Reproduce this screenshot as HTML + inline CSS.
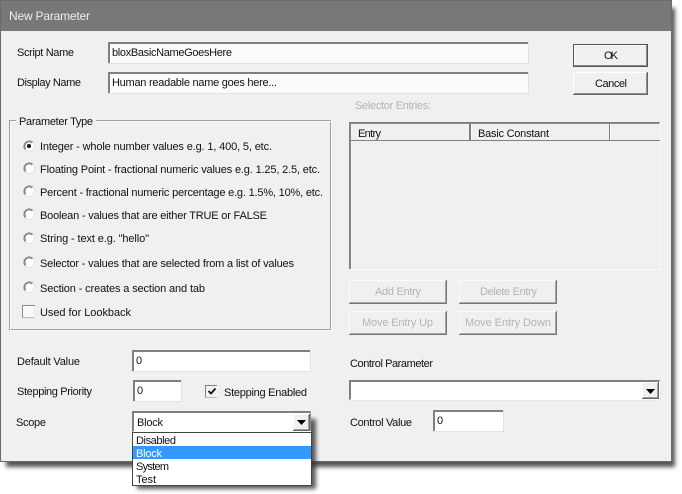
<!DOCTYPE html>
<html><head><meta charset="utf-8"><title>New Parameter</title>
<style>
html,body{margin:0;padding:0;background:#fff;width:682px;height:494px;overflow:hidden}
svg{display:block}
text{font-family:"Liberation Sans",sans-serif;font-size:11px;fill:#111;white-space:pre}
.g{fill:#b4b4b4}
</style></head><body>
<svg width="682" height="494" viewBox="0 0 682 494" xmlns="http://www.w3.org/2000/svg">
<defs>
<filter id="b" x="-10%" y="-10%" width="120%" height="120%"><feGaussianBlur stdDeviation="2.2"/></filter>
<filter id="b2" x="-20%" y="-20%" width="140%" height="140%"><feGaussianBlur stdDeviation="2"/></filter>
<g id="radio">
<circle cx="0" cy="0" r="5.5" fill="#fff"/>
<path d="M-3.8 3.8A5.4 5.4 0 0 1 3.8 -3.8" fill="none" stroke="#8c8c8c" stroke-width="1.2"/>
<path d="M-2.9 2.9A4.1 4.1 0 0 1 2.9 -2.9" fill="none" stroke="#6e6e6e" stroke-width=".8"/>
<path d="M3.9 -3.9A5.5 5.5 0 0 1 -3.9 3.9" fill="none" stroke="#e4e4e4" stroke-width="1.1"/>
</g>
</defs>
<rect x="6" y="8" width="669" height="459" fill="#555" filter="url(#b)"/>
<rect x="0" y="0" width="672" height="462" fill="#6a6a6a"/>
<rect x="1" y="1" width="670" height="30" fill="#787878"/>
<rect x="1" y="31" width="670" height="430" fill="#f0f0f0"/>
<text x="9" y="20" textLength="81" style="fill:#eeeeee;font-size:12px">New Parameter</text>

<!-- inputs -->
<g fill="#fff">
<path d="M108 42h421v22h-421z" fill="#fbfbfb"/>
<path d="M108 72h421v22h-421z" fill="#fbfbfb"/>
<rect x="132" y="350" width="179" height="22"/>
<rect x="133" y="380" width="49" height="22"/>
<rect x="433" y="410" width="71" height="22"/>
</g>
<g fill="none" stroke="#808080" stroke-width="1">
<path d="M108.5 64V42.5H529"/><path d="M109.5 63V43.5H528"/>
<path d="M108.5 94V72.5H529"/><path d="M109.5 93V73.5H528"/>
<path d="M132.5 372V350.5H311"/><path d="M133.5 371V351.5H310"/>
<path d="M133.5 402V380.5H182"/><path d="M134.5 401V381.5H181"/>
<path d="M433.5 432V410.5H504"/><path d="M434.5 431V411.5H503"/>
</g>
<g fill="none" stroke="#e2e2e2"><path d="M529 42v22h-421M529 72v22h-421M311 350v22h-179M182 380v22h-49M504 410v22h-71" transform="translate(-.5 -.5)"/></g>

<text x="17" y="56" textLength="57">Script Name</text>
<text x="17" y="86" textLength="64">Display Name</text>
<text x="112" y="56" textLength="120">bloxBasicNameGoesHere</text>
<text x="112" y="86" textLength="165">Human readable name goes here...</text>

<!-- OK/Cancel -->
<rect x="573" y="44" width="75" height="23" fill="#555"/>
<rect x="574" y="45" width="73" height="21" fill="#8a8a8a"/>
<rect x="574" y="45" width="72" height="20" fill="#fff"/>
<rect x="575" y="46" width="71" height="19" fill="#f0f0f0"/>
<rect x="573" y="72" width="75" height="23" fill="#666"/>
<rect x="573" y="72" width="74" height="22" fill="#fff"/>
<rect x="574" y="73" width="73" height="21" fill="#8f8f8f"/>
<rect x="574" y="73" width="72" height="20" fill="#f0f0f0"/>
<text x="604" y="59" textLength="14">OK</text>
<text x="595" y="87" textLength="32">Cancel</text>

<!-- group box -->
<rect x="9.5" y="120.5" width="321" height="209" fill="none" stroke="#a0a0a0"/>
<rect x="10.5" y="121.5" width="321" height="209" fill="none" stroke="#fcfcfc" opacity=".7"/>
<rect x="16" y="118" width="80" height="6" fill="#f0f0f0"/>
<text x="19" y="125" textLength="74">Parameter Type</text>

<use href="#radio" x="29" y="146"/><circle cx="29" cy="146" r="2" fill="#111"/>
<use href="#radio" x="29" y="168"/>
<use href="#radio" x="29" y="191"/>
<use href="#radio" x="29" y="214"/>
<use href="#radio" x="29" y="238"/>
<use href="#radio" x="29" y="262"/>
<use href="#radio" x="29" y="287"/>
<text x="40" y="150" textLength="232">Integer - whole number values e.g. 1, 400, 5, etc.</text>
<text x="40" y="173" textLength="280">Floating Point - fractional numeric values e.g. 1.25, 2.5, etc.</text>
<text x="40" y="196" textLength="283">Percent - fractional numeric percentage e.g. 1.5%, 10%, etc.</text>
<text x="40" y="219" textLength="227">Boolean - values that are either TRUE or FALSE</text>
<text x="40" y="242" textLength="109">String - text e.g. "hello"</text>
<text x="40" y="267" textLength="254">Selector - values that are selected from a list of values</text>
<text x="40" y="292" textLength="165">Section - creates a section and tab</text>
<rect x="22.5" y="305.5" width="12" height="12" fill="#fafafa" stroke="#8a8a8a"/>
<path d="M34.5 306v12h-12" fill="none" stroke="#e8e8e8"/>
<text x="40" y="316" textLength="91">Used for Lookback</text>

<!-- selector -->
<text class="g" x="355" y="109" textLength="76">Selector Entries:</text>
<rect x="349" y="122" width="312" height="148" fill="#f0f0f0"/>
<path d="M349.5 270V122.5H660" fill="none" stroke="#7f7f7f"/>
<path d="M350.5 269V123.5H659" fill="none" stroke="#8a8a8a"/>
<path d="M660.5 122V269.5H349" fill="none" stroke="#fafafa"/>
<path d="M351 140.5H660" stroke="#808080"/>
<path d="M469.5 124V140M470.5 124V140M609.5 124V140" stroke="#808080"/>
<path d="M471.5 124V140M610.5 124V140" stroke="#fcfcfc"/>
<text x="358" y="137" textLength="23">Entry</text>
<text x="478" y="137" textLength="71">Basic Constant</text>

<!-- disabled buttons -->
<g fill="none">
<path d="M349.5 303V280.5H447" stroke="#fbfbfb"/><path d="M446.5 280V303.5H349" stroke="#777"/>
<path d="M459.5 303V280.5H557" stroke="#fbfbfb"/><path d="M556.5 280V303.5H459" stroke="#777"/>
<path d="M349.5 334V311.5H447" stroke="#fbfbfb"/><path d="M446.5 311V334.5H349" stroke="#777"/>
<path d="M459.5 334V311.5H557" stroke="#fbfbfb"/><path d="M556.5 311V334.5H459" stroke="#777"/>
<path d="M445.5 281V302.5H350M555.5 281V302.5H460M445.5 312V333.5H350M555.5 312V333.5H460" stroke="#a6a6a6"/>
</g>
<text class="g" x="375" y="295" textLength="46">Add Entry</text>
<text class="g" x="480" y="295" textLength="57">Delete Entry</text>
<text class="g" x="362" y="326" textLength="71">Move Entry Up</text>
<text class="g" x="465" y="326" textLength="86">Move Entry Down</text>

<text x="350" y="367" textLength="83">Control Parameter</text>
<rect x="349" y="380" width="312" height="21" fill="#fff"/>
<path d="M349.5 400V380.5H660" fill="none" stroke="#808080"/>
<path d="M350.5 399V381.5H659" fill="none" stroke="#808080"/>
<path d="M660.5 380V400.5H349" fill="none" stroke="#e8e8e8"/>
<rect x="642" y="382" width="17" height="17" fill="#666"/>
<rect x="642" y="382" width="16" height="16" fill="#fff"/>
<rect x="643" y="383" width="15" height="15" fill="#a0a0a0"/>
<rect x="643" y="383" width="14" height="14" fill="#f0f0f0"/>
<path d="M646 389h9l-4.5 5z" fill="#000"/>
<text x="350" y="426" textLength="62">Control Value</text>
<text x="437" y="424" textLength="6">0</text>

<text x="17" y="365" textLength="63">Default Value</text>
<text x="17" y="395" textLength="75">Stepping Priority</text>
<text x="16" y="426" textLength="30">Scope</text>
<text x="136" y="364" textLength="6">0</text>
<text x="137" y="394" textLength="6">0</text>

<rect x="205.5" y="385.5" width="12" height="12" fill="#f2f2f2" stroke="#808080"/>
<path d="M217.5 385v13h-12" fill="none" stroke="#f8f8f8"/>
<path d="M208.5 391l2.5 2.5 4.5-5" fill="none" stroke="#111" stroke-width="1.8"/>
<text x="224" y="396" textLength="83">Stepping Enabled</text>

<!-- dropdown shadow -->
<rect x="137" y="419" width="179" height="70" fill="#333" opacity=".8" filter="url(#b2)"/>
<!-- scope combo -->
<rect x="132" y="411" width="179" height="21" fill="#fff"/>
<path d="M132.5 432V411.5H311" fill="none" stroke="#808080"/>
<path d="M133.5 431V412.5H310" fill="none" stroke="#808080"/>
<path d="M310.5 411V431" stroke="#909090"/>
<rect x="293" y="414" width="17" height="17" fill="#666"/>
<rect x="293" y="414" width="16" height="16" fill="#fff"/>
<rect x="294" y="415" width="15" height="15" fill="#a0a0a0"/>
<rect x="294" y="415" width="14" height="14" fill="#f0f0f0"/>
<path d="M297 420h9l-4.500 5z" fill="#000"/>
<text x="137" y="426" textLength="26">Block</text>

<rect x="132.500" y="432.500" width="179" height="53" fill="#fff" stroke="#444"/>
<rect x="133" y="446" width="178" height="13" fill="#3399ff"/>
<text x="136" y="444" textLength="40">Disabled</text>
<text x="136" y="457" textLength="26" style="fill:#fff">Block</text>
<text x="136" y="470" textLength="33">System</text>
<text x="136" y="483" textLength="20">Test</text>
</svg>
</body></html>
